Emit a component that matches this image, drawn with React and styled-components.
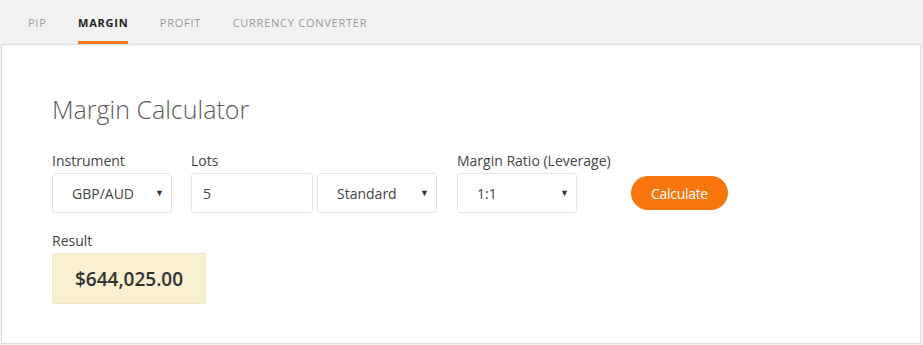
import React, { useState } from 'react';
import styled, { createGlobalStyle } from 'styled-components';

const GlobalStyle = createGlobalStyle`
  body {
    margin: 0;
    background: #fff;
    font-family: "Open Sans", "Liberation Sans", sans-serif;
  }
`;

const tabs = ['Pip', 'Margin', 'Profit', 'Currency Converter'];

const App = () => {
  const [active, setActive] = useState('Margin');
  return (
    <Page>
      <GlobalStyle />
      <TabBar>
        {tabs.map((t) => (
          <Tab key={t} active={t === active} onClick={() => setActive(t)}>
            {t}
          </Tab>
        ))}
      </TabBar>
      <Panel>
        <Title>Margin Calculator</Title>
        <FormRow>
          <Field>
            <Label>Instrument</Label>
            <SelectBox width={120}>
              <Select defaultValue="GBP/AUD">
                <option>GBP/AUD</option>
                <option>EUR/USD</option>
              </Select>
              <Arrow>▼</Arrow>
            </SelectBox>
          </Field>
          <Field>
            <Label>Lots</Label>
            <Pair>
              <Input defaultValue="5" />
              <SelectBox width={120}>
                <Select defaultValue="Standard">
                  <option>Standard</option>
                  <option>Mini</option>
                  <option>Micro</option>
                </Select>
                <Arrow>▼</Arrow>
              </SelectBox>
            </Pair>
          </Field>
          <Field width={120} offset={1}>
            <Label>Margin Ratio (Leverage)</Label>
            <SelectBox width={120}>
              <Select defaultValue="1:1">
                <option>1:1</option>
                <option>1:50</option>
                <option>1:100</option>
              </Select>
              <Arrow>▼</Arrow>
            </SelectBox>
          </Field>
          <Button>Calculate</Button>
        </FormRow>
        <Field>
          <Label>Result</Label>
          <Result>$644,025.00</Result>
        </Field>
      </Panel>
    </Page>
  );
};

export default App;

const Page = styled.div`
  width: 923px;
  height: 345px;
  background: #f2f2f2;
  display: flex;
  flex-direction: column;
`;

const TabBar = styled.div`
  height: 44px;
  display: flex;
  gap: 31.5px;
  padding-left: 28px;
`;

const Tab = styled.div`
  display: flex;
  align-items: center;
  font-size: 11px;
  font-weight: ${(p) => (p.active ? 700 : 400)};
  letter-spacing: 0.75px;
  text-transform: uppercase;
  color: ${(p) => (p.active ? '#222' : '#999')};
  border-bottom: 3px solid ${(p) => (p.active ? '#f47b20' : 'transparent')};
  padding-top: 3px;
  box-sizing: border-box;
  cursor: pointer;
`;

const Panel = styled.div`
  margin: 0 2px 1px 1px;
  flex: 1;
  background: #fff;
  border: 1px solid #dcdcdc;
  padding: 45px 50px 0;
`;

const Title = styled.h1`
  margin: 0 0 23px;
  font-size: 25px;
  font-weight: 300;
  color: #5a5a5a;
  line-height: 38px;
`;

const FormRow = styled.div`
  display: flex;
  align-items: flex-end;
  gap: 19px;
  margin-bottom: 18px;
`;

const Field = styled.div`
  display: flex;
  flex-direction: column;
  width: ${(p) => (p.width ? `${p.width}px` : 'auto')};
  margin-left: ${(p) => p.offset || 0}px;
`;

const Label = styled.label`
  font-size: 14px;
  color: #444;
  line-height: 20px;
  margin-bottom: 2px;
  white-space: nowrap;
`;

const Pair = styled.div`
  display: flex;
  gap: 4px;
`;

const SelectBox = styled.div`
  position: relative;
  width: ${(p) => p.width}px;
`;

const Select = styled.select`
  appearance: none;
  width: 100%;
  height: 40px;
  border: 1px solid #e4e4e4;
  border-radius: 3px;
  background: #fff;
  padding: 0 0 0 19px;
  font-family: inherit;
  font-size: 14px;
  color: #444;
  outline: none;
`;

const Arrow = styled.span`
  position: absolute;
  right: 8px;
  top: 13px;
  font-size: 9px;
  color: #333;
  pointer-events: none;
`;

const Input = styled.input`
  width: 122px;
  height: 40px;
  box-sizing: border-box;
  border: 1px solid #e4e4e4;
  border-radius: 3px;
  padding: 0 11px;
  font-family: inherit;
  font-size: 14px;
  color: #444;
  outline: none;
`;

const Button = styled.button`
  margin-left: 35px;
  margin-bottom: 3px;
  width: 97px;
  height: 34px;
  border: none;
  border-radius: 17px;
  background: #f7760d;
  color: #fff;
  font-family: inherit;
  font-size: 14px;
  letter-spacing: -0.3px;
  cursor: pointer;
`;

const Result = styled.div`
  width: 154px;
  height: 51px;
  box-sizing: border-box;
  background: #f8f0d1;
  border: 1px solid #f0e6c2;
  border-radius: 2px;
  display: flex;
  align-items: center;
  justify-content: center;
  font-size: 19px;
  font-weight: 600;
  color: #333;
`;
